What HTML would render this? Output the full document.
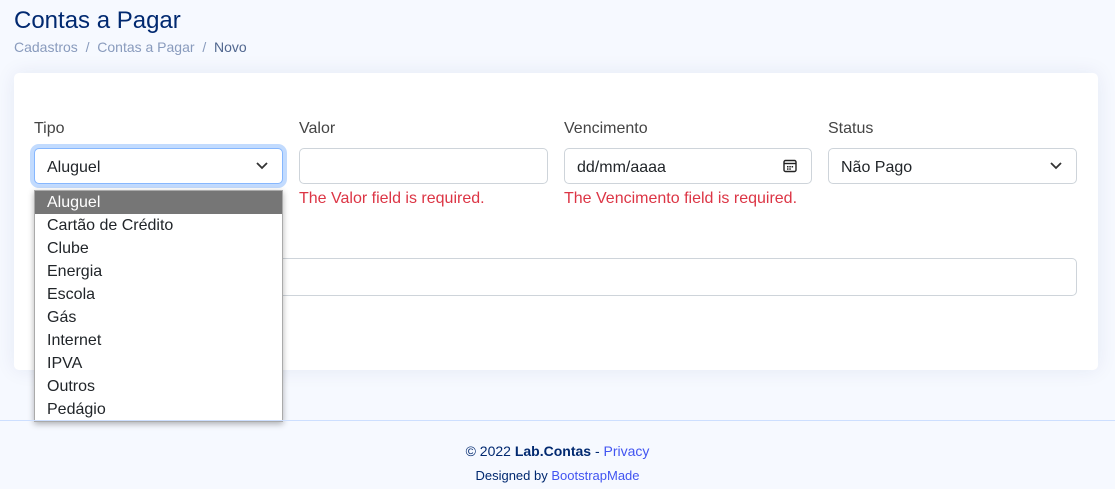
<!DOCTYPE html><html><head><style>
body{margin:0;width:1115px;height:489px;background:#f6f9ff;font-family:"Liberation Sans",sans-serif;position:relative;overflow:hidden;color:#212529}
.a{position:absolute;white-space:nowrap}
.card{position:absolute;left:14px;top:73px;width:1084px;height:297px;background:#fff;border-radius:5px;box-shadow:0 0 20px rgba(1,41,112,.08)}
.lbl{font-size:16px;color:#444}
.in{position:absolute;height:36px;border:1px solid #ced4da;border-radius:5px;background:#fff;box-sizing:border-box;font-size:16px;padding:0 12px;line-height:37px;color:#212529}
.err{font-size:16px;color:#dc3545}
.dd{position:absolute;left:34px;top:190px;width:249px;height:232px;background:#fff;border:1px solid #aaa;box-shadow:0 2px 6px rgba(0,0,0,.3);box-sizing:border-box;font-size:16px}
.dd div{height:23px;line-height:24px;padding-left:12px}
</style></head><body>
<div class="a" style="left:14px;top:7px;font-size:24px;color:#012970">Contas a Pagar</div>
<div class="a" style="left:14px;top:39px;font-size:14px;color:#899bbd">Cadastros &nbsp;/&nbsp; Contas a Pagar &nbsp;/&nbsp; <span style="color:#51678f">Novo</span></div>
<div class="card"></div>
<div class="a lbl" style="left:34px;top:120px">Tipo</div>
<div class="a lbl" style="left:299px;top:120px">Valor</div>
<div class="a lbl" style="left:564px;top:120px">Vencimento</div>
<div class="a lbl" style="left:828px;top:120px">Status</div>
<div class="in" style="left:34px;top:148px;width:249px;border-color:#86b7fe;box-shadow:0 0 0 4px rgba(13,110,253,.25)">Aluguel<svg style="position:absolute;right:14px;top:13px" width="12" height="8"><path d="M1 1l5 5 5-5" stroke="#333" stroke-width="1.8" fill="none"/></svg></div>
<div class="in" style="left:299px;top:148px;width:249px"></div>
<div class="in" style="left:564px;top:148px;width:248px">dd/mm/aaaa<svg style="position:absolute;right:14px;top:10px" width="14" height="14"><rect x="1" y="1.5" width="12" height="11" rx="1.5" fill="none" stroke="#222" stroke-width="1.4"/><line x1="1" y1="4.5" x2="13" y2="4.5" stroke="#222" stroke-width="1.4"/><g fill="#222"><rect x="4" y="7" width="1.5" height="1.5"/><rect x="6.3" y="7" width="1.5" height="1.5"/><rect x="8.6" y="7" width="1.5" height="1.5"/><rect x="4" y="9.3" width="1.5" height="1.5"/><rect x="6.3" y="9.3" width="1.5" height="1.5"/></g></svg></div>
<div class="in" style="left:828px;top:148px;width:249px">Não Pago<svg style="position:absolute;right:14px;top:13px" width="12" height="8"><path d="M1 1l5 5 5-5" stroke="#333" stroke-width="1.8" fill="none"/></svg></div>
<div class="a err" style="left:299px;top:190px">The Valor field is required.</div>
<div class="a err" style="left:564px;top:190px">The Vencimento field is required.</div>
<div class="in" style="left:34px;top:258px;width:1043px;height:38px"></div>
<div class="dd"><div style="background:#767676;color:#fff">Aluguel</div><div>Cartão de Crédito</div><div>Clube</div><div>Energia</div><div>Escola</div><div>Gás</div><div>Internet</div><div>IPVA</div><div>Outros</div><div>Pedágio</div></div>
<div class="a" style="left:0;top:420px;width:1115px;border-top:1px solid #cddfff"></div>
<div class="a" style="left:0;top:443px;width:1115px;text-align:center;font-size:14px;color:#012970">© 2022 <b>Lab.Contas</b> - <span style="color:#4154f1">Privacy</span></div>
<div class="a" style="left:0;top:468px;width:1115px;text-align:center;font-size:13px;color:#012970">Designed by <span style="color:#4154f1">BootstrapMade</span></div>
</body></html>
